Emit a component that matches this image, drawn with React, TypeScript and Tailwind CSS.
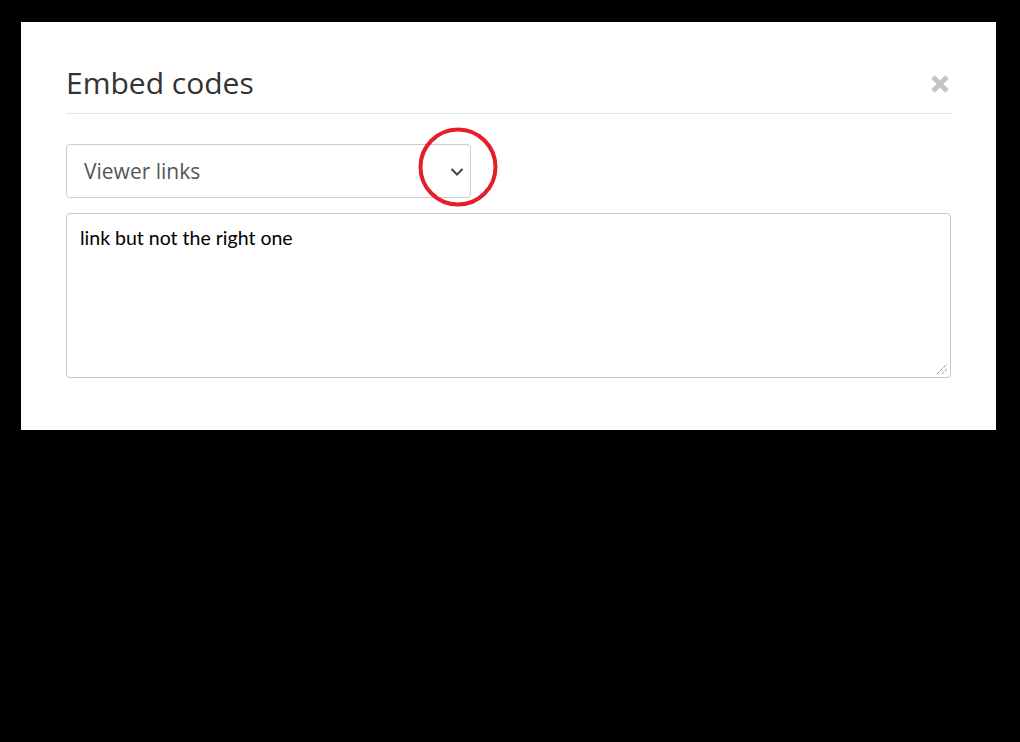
import React from "react";

export default function App() {
  return (
    <div className="min-h-[742px] w-full bg-black pl-[21px] pt-[22px]" style={{ fontFamily: '"Open Sans", sans-serif' }}>
      <div className="h-[408px] w-[975px] bg-white px-[45px] pt-[42px]">
        <div className="flex items-center justify-between border-b border-[#e5e5e5] pb-[11px]">
          <h1 className="text-[30px] leading-[38px] text-[#333]">Embed codes</h1>
          <button className="mr-[1px] mt-[2px] text-[#c4c4c4]" aria-label="Close">
            <svg width="20" height="20" viewBox="0 0 20 20">
              <path d="M3 3 L17 17 M17 3 L3 17" stroke="currentColor" strokeWidth="5" />
            </svg>
          </button>
        </div>

        <div className="relative mt-[30px] w-[405px]">
          <div className="flex h-[54px] items-center justify-between rounded-[4px] border border-[#ccc] pl-[17px] pr-[3px]">
            <span className="mt-[1px] text-[21px] text-[#555]">Viewer links</span>
            <svg width="18" height="18" viewBox="0 0 18 18" className="mr-[1px] mt-[1px]">
              <path d="M3.5 6 L9 11.5 L14.5 6" fill="none" stroke="#444" strokeWidth="2" />
            </svg>
          </div>
          <svg width="84" height="84" viewBox="0 0 84 84" className="pointer-events-none absolute left-[350px] top-[-19px]">
            <ellipse cx="42" cy="42" rx="37.5" ry="37.5" fill="none" stroke="#e61e2a" strokeWidth="4" />
          </svg>
        </div>

        <div className="relative mt-[15px] h-[165px] rounded-[4px] border border-[#c8c8c8] px-[13px] pt-[11px]">
          <p className="text-[19.5px] leading-[26px] text-black" style={{ fontFamily: 'Lato, "Open Sans", sans-serif' }}>
            link but not the right one
          </p>
          <svg width="12" height="12" viewBox="0 0 12 12" className="absolute bottom-[2px] right-[2px]">
            <path d="M1 11 L11 1 M6 11 L11 6" stroke="#555" strokeWidth="1" strokeDasharray="1 1" />
          </svg>
        </div>
      </div>
    </div>
  );
}
